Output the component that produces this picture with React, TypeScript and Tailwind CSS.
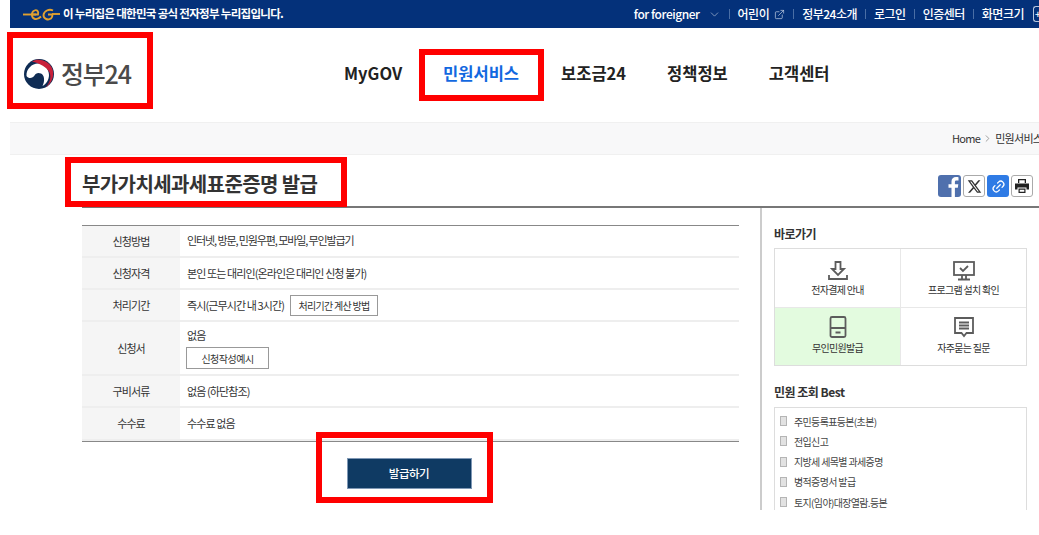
import { ChevronDown, ChevronRight, ExternalLink, Link2 } from "lucide-react";

const font = { fontFamily: '"Noto Sans CJK KR", "Noto Sans", sans-serif' };

function Sep() {
  return <span className="mx-[8px] h-[10px] w-px bg-[#4a6ea5]" />;
}

function RedBox({ className }: { className: string }) {
  return <div className={`pointer-events-none absolute border-[6px] border-[#ff0000] ${className}`} />;
}

function Row({ label, className, children }: { label: string; className: string; children: React.ReactNode }) {
  return (
    <div className={`flex border-b-2 border-[#eeeeee] ${className}`}>
      <div className="flex w-[98px] shrink-0 items-center justify-center bg-[#f5f5f5] text-[11px] tracking-[-0.9px] text-[#333]">
        {label}
      </div>
      <div className="flex flex-1 flex-col justify-center pl-[7px] text-[11px] tracking-[-0.9px] text-[#333]">{children}</div>
    </div>
  );
}

function Shortcut({ label, green, className, children }: { label: string; green?: boolean; className: string; children: React.ReactNode }) {
  return (
    <div className={`flex flex-col items-center justify-start ${green ? "bg-[#e3fbdf]" : "bg-white"} ${className}`}>
      <svg width="24" height="24" viewBox="0 0 24 24" fill="none" stroke="#5c5c5c" strokeWidth="1.8" className="shrink-0">
        {children}
      </svg>
      <span className="text-[10px] leading-[14px] tracking-[-0.7px] text-[#333]">{label}</span>
    </div>
  );
}

const best = ["주민등록표등본(초본)", "전입신고", "지방세 세목별 과세증명", "병적증명서 발급", "토지(임야)대장열람.등본"];

export default function App() {
  return (
    <div className="relative h-[535px] w-[1039px] overflow-hidden bg-white pl-[10px]" style={font}>
      <div className="flex h-[28px] items-center justify-between bg-[#04317a] pl-[13px] text-white">
        <div className="flex items-center">
          <svg width="37" height="13" viewBox="0 0 37 13" fill="none" stroke="#e0a030" strokeWidth="1.9">
            <path d="M0 6.500H13" />
            <path d="M8 6.500H15C16 3 13.500 1.500 11.500 2.500C8 4 8 10 12 11C14 11.500 16 10.500 18 8.500" />
            <path d="M30 2.500C26 0.500 21 3 20.500 7C20.500 11 25 12.500 28 10.500C29 9.500 29.500 8 29.500 6.500H25" />
            <path d="M29 6H37" />
          </svg>
          <span className="ml-[3px] text-[11.5px] font-bold tracking-[-0.7px]">이 누리집은 대한민국 공식 전자정부 누리집입니다.</span>
        </div>
        <div className="flex items-center text-[12px] font-medium tracking-[-0.5px]">
          <span className="tracking-[-0.45px]">for foreigner</span>
          <ChevronDown className="ml-[8px] h-[13px] w-[13px] text-[#b9c7dd]" strokeWidth={1.2} />
          <Sep />
          <span>어린이</span>
          <ExternalLink className="ml-[5px] h-[11px] w-[11px] text-[#c7d3e6]" strokeWidth={1.5} />
          <Sep />
          <span>정부24소개</span>
          <Sep />
          <span>로그인</span>
          <Sep />
          <span>인증센터</span>
          <Sep />
          <span>화면크기</span>
          <span className="ml-[9px] mr-[-1px] flex h-[16px] w-[7px] items-center rounded-l-[3px] border border-r-0 border-[#b9c7dd] pl-[1px] text-[10px] leading-none">
            +
          </span>
        </div>
      </div>

      <div className="flex h-[94px] items-center pb-[3px]">
        <div className="flex w-[334px] items-center pl-[14px]">
          <svg width="30" height="30" viewBox="0 0 30 30">
            <circle cx="15" cy="15" r="15" fill="#0f2c54" />
            <path d="M2.500 17C2 10 8 4.500 14 4.500C20 4.500 25 10 25 16C25 21 22 25 18.500 27C21 22 20.500 16 17 14.500C14 13 11.500 14.500 10.500 16.500C9 19 5 20.500 2.500 17Z" fill="#ffffff" />
            <path d="M8 2.500C14 -1 24 1 28 9C31 16 28 24 21.500 28.500C26 24 27.500 18 25.500 13.500C23 8 16 4.500 8 2.500Z" fill="#c8203a" />
          </svg>
          <span className="ml-[7px] text-[25px] font-medium leading-none tracking-[-1.2px] text-[#4a4a4a]">정부24</span>
        </div>
        <nav className="flex items-center text-[16.5px] font-bold text-[#222]">
          <span>MyGOV</span>
          <span className="ml-[41px] text-[#1268e0]">민원서비스</span>
          <span className="ml-[42px]">보조금24</span>
          <span className="ml-[41px]">정책정보</span>
          <span className="ml-[41px]">고객센터</span>
        </nav>
      </div>

      <div className="flex h-[33px] items-center overflow-hidden whitespace-nowrap border-y border-[#f0f0f0] bg-[#f8f8f9] pl-[942px] text-[11px] tracking-[-0.7px] text-[#333]">
        <span>Home</span>
        <ChevronRight className="mx-[2px] h-[11px] w-[11px] shrink-0 text-[#777]" strokeWidth={1.5} />
        <span>민원서비스</span>
      </div>

      <div className="ml-[72px] flex h-[53px] items-center justify-between border-b-2 border-[#777] pr-[6px]">
        <h1 className="pt-[6px] text-[20px] font-bold tracking-[-0.6px] text-[#333]">부가가치세과세표준증명 발급</h1>
        <div className="mt-[11px] flex gap-[2px]">
          <span className="ml-[-1px] flex h-[22px] w-[23px] items-center justify-center rounded-[3px] bg-[#4f70ad]">
            <svg width="22" height="22" viewBox="0 0 22 22" fill="#ffffff">
              <path d="M12.500 22V12.800H9.500V9.200H12.500V6.600C12.500 3.600 14.300 2 17 2C18.200 2 19.200 2.100 19.500 2.200V5.400H17.600C16.200 5.400 15.900 6.100 15.900 7.100V9.200H19.300L18.800 12.800H15.900V22Z" />
            </svg>
          </span>
          <span className="flex h-[22px] w-[22px] items-center justify-center rounded-[3px] border border-[#aaa] bg-white">
            <svg width="15" height="15" viewBox="0 0 24 24" fill="#333">
              <path d="M18.200 2H21.500L14.300 10.300L22.800 22H16.100L10.900 15.100L4.900 22H1.600L9.300 13.100L1.200 2H8.100L12.800 8.400ZM17 20H18.900L7 3.900H5Z" />
            </svg>
          </span>
          <span className="flex h-[22px] w-[22px] items-center justify-center rounded-[3px] bg-[#2f7be5]">
            <Link2 className="h-[15px] w-[15px] -rotate-45 text-white" strokeWidth={2} />
          </span>
          <span className="flex h-[22px] w-[22px] items-center justify-center rounded-[3px] border border-[#aaa] bg-white">
            <svg width="16" height="16" viewBox="0 0 16 16" fill="#222">
              <path d="M4 1H12V5H10.700V2.300H5.300V5H4Z" />
              <path d="M1 5.500H15V11.500H12.500V9.500H3.500V11.500H1Z" />
              <path d="M4.500 10.500H11.500V15H4.500ZM5.700 11.700V13.800H10.300V11.700Z" />
            </svg>
          </span>
        </div>
      </div>

      <div className="flex h-[302px] items-start">
        <div className="ml-[72px] mt-[17px] w-[657px]">
          <div className="border-y border-[#888]">
            <Row label="신청방법" className="h-[32px] pb-0"><span className="mt-[-1px] tracking-[-1.1px]">인터넷, 방문, 민원우편, 모바일, 무인발급기</span></Row>
            <Row label="신청자격" className="h-[32px]">본인 또는 대리인(온라인은 대리인 신청 불가)</Row>
            <Row label="처리기간" className="h-[32px]">
              <div className="flex items-center">
                <span>즉시(근무시간 내 3시간)</span>
                <span className="ml-[6px] flex h-[21px] w-[88px] items-center justify-center border border-[#999] text-[10px] tracking-[-0.7px]">처리기간 계산 방법</span>
              </div>
            </Row>
            <Row label="신청서" className="h-[54px]">
              <span className="mt-[1px] leading-[14px]">없음</span>
              <span className="ml-[-1px] mt-[5px] flex h-[22px] w-[83px] items-center justify-center border border-[#999] text-[10px] tracking-[-0.5px]">신청작성예시</span>
            </Row>
            <Row label="구비서류" className="h-[32px]">없음 (하단참조)</Row>
            <Row label="수수료" className="h-[33px] border-b-0">수수료 없음</Row>
          </div>
          <div className="mt-[16px] flex justify-center">
            <button className="mr-[3px] h-[31px] w-[125px] border border-[#7f98b5] bg-[#0f3a63] text-[11.5px] font-medium tracking-[-0.5px] text-white">발급하기</button>
          </div>
        </div>

        <aside className="ml-[21px] h-full w-[279px] overflow-hidden border-l-2 border-[#ccc] pl-[12px]">
          <h2 className="mt-[17px] text-[12px] font-bold leading-[18px] tracking-[-0.5px] text-[#333]">바로가기</h2>
          <div className="mt-[5px] grid h-[118px] w-[253px] grid-cols-2 grid-rows-2 gap-[1px] border border-[#ddd] bg-[#e8e8e8]">
            <Shortcut label="전자결제 안내" className="pt-[10px]">
              <path d="M9.500 3H14.500V10H18L12 16L6 10H9.500Z" />
              <path d="M3 16V20H21V16" />
            </Shortcut>
            <Shortcut label="프로그램 설치 확인" className="pt-[10px]">
              <rect x="2" y="3" width="20" height="13" />
              <path d="M8 9L11 12L16 7M10 16V20M14 16V20M6 20.500H18" />
            </Shortcut>
            <Shortcut label="무인민원발급" green className="gap-[2px] pt-[7px]">
              <rect x="4.500" y="2" width="15" height="20" rx="1.500" />
              <path d="M4.500 13H19.500M9.500 17.500H14.500" />
            </Shortcut>
            <Shortcut label="자주묻는 질문" className="gap-[2px] pt-[7px]">
              <path d="M3 3H21V18H14.500L12 21L9.500 18H3Z" />
              <path d="M7 7.500H17M7 10.500H17M7 13.500H17" />
            </Shortcut>
          </div>
          <h2 className="mt-[17px] text-[12px] font-bold leading-[18px] tracking-[-0.5px] text-[#333]">민원 조회 Best</h2>
          <ul className="mt-[6px] h-[140px] w-[253px] border border-[#ddd] px-[5px] pt-[3px]">
            {best.map((item) => (
              <li key={item} className="flex h-[20.25px] items-center text-[10px] tracking-[-0.65px] text-[#444]">
                <span className="mr-[7px] h-[10px] w-[7px] border border-[#b5b5b5] bg-[#e2e2e2]" />
                {item}
              </li>
            ))}
          </ul>
        </aside>
      </div>

      <RedBox className="left-[7px] top-[32px] h-[77px] w-[146px]" />
      <RedBox className="left-[419px] top-[49px] h-[52px] w-[125px]" />
      <RedBox className="left-[65px] top-[157px] h-[50px] w-[282px]" />
      <RedBox className="left-[316px] top-[432px] h-[71px] w-[177px]" />
    </div>
  );
}
